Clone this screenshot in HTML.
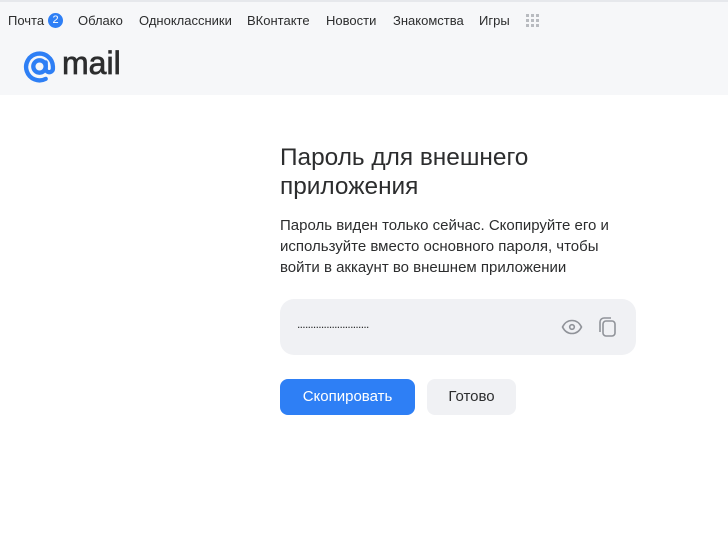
<!DOCTYPE html>
<html><head><meta charset="utf-8"><style>
*{margin:0;padding:0;box-sizing:border-box}
body{width:728px;height:533px;background:#fff;font-family:"Liberation Sans",sans-serif;position:relative;overflow:hidden;color:#2c2d2e}
.hdr{position:absolute;left:0;top:0;width:728px;height:95px;background:#f6f7f9;border-top:2px solid #e6e8ec}
.nav{position:absolute;top:11px;left:8px;font-size:13px;color:#2c2d2e;white-space:nowrap}
.nav span{position:absolute;top:0}
.badge{display:inline-block;width:15px;height:15px;border-radius:50%;background:#2e7ff5;color:#fff;font-size:11px;text-align:center;line-height:15px;position:absolute;top:1px}
.a{position:absolute}
</style></head><body>
<div class="hdr">
<div class="nav">
<span style="left:0">Почта</span><span class="badge" style="left:40px">2</span>
<span style="left:70px">Облако</span>
<span style="left:131px">Одноклассники</span>
<span style="left:239px">ВКонтакте</span>
<span style="left:318px">Новости</span>
<span style="left:385px">Знакомства</span>
<span style="left:471px">Игры</span>
</div>
<svg class="a" style="left:525px;top:11px" width="16" height="16"><g fill="#b8bbc0">
<rect x="1" y="1" width="3" height="3"/><rect x="6" y="1" width="3" height="3"/><rect x="11" y="1" width="3" height="3"/>
<rect x="1" y="6" width="3" height="3"/><rect x="6" y="6" width="3" height="3"/><rect x="11" y="6" width="3" height="3"/>
<rect x="1" y="11" width="3" height="3"/><rect x="6" y="11" width="3" height="3"/><rect x="11" y="11" width="3" height="3"/></g></svg>
<svg class="a" style="left:23px;top:48px" width="33" height="33" viewBox="0 0 32 32"><circle cx="16" cy="16" r="6" fill="none" stroke="#2e7ff5" stroke-width="4.2"/><path d="M22 12v6a3.5 3.5 0 0 0 7 0v-2A13 13 0 1 0 22 28" fill="none" stroke="#2e7ff5" stroke-width="4.2" stroke-linecap="round"/></svg>
<div class="a" style="left:62px;top:43px;font-size:32px;color:#2c2d2e;-webkit-text-stroke:0.7px #2c2d2e">mail</div>
</div>
<div class="a" style="left:280px;top:143px;font-size:24.4px;line-height:29px;color:#2c2d2e">Пароль для внешнего<br>приложения</div>
<div class="a" style="left:280px;top:215px;font-size:15px;line-height:21px;color:#2c2d2e">Пароль виден только сейчас. Скопируйте его и<br>используйте вместо основного пароля, чтобы<br>войти в аккаунт во внешнем приложении</div>
<div class="a" style="left:280px;top:299px;width:356px;height:56px;background:#f0f1f4;border-radius:14px"></div>
<div class="a" style="left:297px;top:317px;font-size:12px;color:#2c2d2e;letter-spacing:-0.68px">...........................</div>
<svg class="a" style="left:561px;top:317px" width="22" height="20" viewBox="0 0 22 20"><path d="M1.5 10C4 5 7.5 3.5 11 3.5S18 5 20.5 10C18 15 14.5 16.5 11 16.5S4 15 1.5 10Z" fill="none" stroke="#909399" stroke-width="1.6"/><circle cx="11" cy="10" r="2.3" fill="none" stroke="#909399" stroke-width="1.6"/></svg>
<svg class="a" style="left:597px;top:316px" width="22" height="22" viewBox="0 0 22 22"><rect x="6" y="5" width="12" height="15" rx="3" fill="none" stroke="#909399" stroke-width="1.6"/><path d="M3 16V6a4 4 0 0 1 4-4h7" fill="none" stroke="#909399" stroke-width="1.6"/></svg>
<div class="a" style="left:280px;top:379px;width:135px;height:36px;background:#2e7ff5;border-radius:8px;color:#fff;font-size:15px;text-align:center;line-height:36px">Скопировать</div>
<div class="a" style="left:427px;top:379px;width:89px;height:36px;background:#f0f1f4;border-radius:8px;color:#2c2d2e;font-size:15px;text-align:center;line-height:36px">Готово</div>
</body></html>
